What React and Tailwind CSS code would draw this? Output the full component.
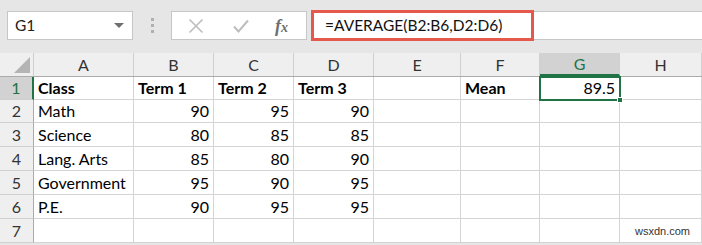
import React from 'react';

const cols = [
  { label: 'A', w: 'w-[100px]' },
  { label: 'B', w: 'w-[80px]' },
  { label: 'C', w: 'w-[80px]' },
  { label: 'D', w: 'w-[80px]' },
  { label: 'E', w: 'w-[87px]' },
  { label: 'F', w: 'w-[79px]' },
  { label: 'G', w: 'w-[80px]' },
  { label: 'H', w: 'flex-1' },
];

const rows = [
  { n: 1, h: 'h-[23px]', cells: ['Class', 'Term 1', 'Term 2', 'Term 3', '', 'Mean', '89.5', ''], bold: true },
  { n: 2, h: 'h-[23px]', cells: ['Math', '90', '95', '90', '', '', '', ''] },
  { n: 3, h: 'h-[24px]', cells: ['Science', '80', '85', '85', '', '', '', ''] },
  { n: 4, h: 'h-[24px]', cells: ['Lang. Arts', '85', '80', '90', '', '', '', ''] },
  { n: 5, h: 'h-[24px]', cells: ['Government', '95', '90', '95', '', '', '', ''] },
  { n: 6, h: 'h-[24px]', cells: ['P.E.', '90', '95', '95', '', '', '', ''] },
  { n: 7, h: 'h-[24px]', cells: ['', '', '', '', '', '', '', ''] },
];

const isNum = (v) => /^[0-9.]+$/.test(v);

const App = () => {
  return (
    <div className="w-[702px] h-[245px] bg-[#e6e6e6] overflow-hidden font-['Lato','Noto_Sans',sans-serif] text-[16px] text-black">

      {/* toolbar */}
      <div className="h-[53px] flex items-start pt-[11px] pl-[7px]">
        <div className="w-[126px] h-[29px] bg-white border border-[#c6c6c6] flex items-center justify-between pl-[7px] pr-[8px]">
          <span className="text-[15.5px] text-[#222]">G1</span>
          <div className="w-0 h-0 border-l-[5px] border-r-[5px] border-t-[5px] border-l-transparent border-r-transparent border-t-[#6f6f6f]"></div>
        </div>
        <div className="w-[38px] h-[29px] flex flex-col items-center justify-center gap-[3px]">
          <div className="w-[3px] h-[3px] bg-[#b0b0b0]"></div>
          <div className="w-[3px] h-[3px] bg-[#b0b0b0]"></div>
          <div className="w-[3px] h-[3px] bg-[#b0b0b0]"></div>
        </div>
        <div className="w-[136px] h-[29px] bg-white border border-[#c6c6c6] flex items-center pl-[16px]">
          <svg width="16" height="16" viewBox="0 0 16 16" className="mr-[29px]">
            <path d="M1.5 1.5 L14.5 14.5 M14.5 1.5 L1.5 14.5" stroke="#bdbdbd" strokeWidth="1.6" fill="none" />
          </svg>
          <svg width="16" height="14" viewBox="0 0 16 14" className="mr-[26px]">
            <path d="M1 7.5 L5.5 12.5 L15 1.5" stroke="#bdbdbd" strokeWidth="2" fill="none" />
          </svg>
          <span className="font-['Liberation_Serif',serif] italic font-bold text-[#6f6f6f] text-[18px] leading-none">f<span className="text-[14px]">x</span></span>
        </div>
        <div className="ml-[4px] flex-1 h-[29px] bg-white border-y border-[#c6c6c6] flex items-center">
          <div className="w-[223px] h-[31px] -my-px border-[3px] border-[#e5584c] flex items-center pl-[11px]">
            <span className="text-[15.5px] text-[#111]">=AVERAGE(B2:B6,D2:D6)</span>
          </div>
        </div>
      </div>

      {/* sheet */}
      <div className="bg-white relative">
        {/* column headers */}
        <div className="flex h-[24px] bg-[#efefef] border-b border-[#ababab]">
          <div className="w-[34px] flex items-end justify-end pr-[3px] pb-[3px] border-r border-[#d0d0d0]">
            <svg width="16" height="16" viewBox="0 0 16 16">
              <path d="M16 0 L16 16 L0 16 Z" fill="#b4b4b4" />
            </svg>
          </div>
          {cols.map((c) => (
            <div
              key={c.label}
              className={`${c.w} flex items-center justify-center border-r border-[#d0d0d0] ${c.label === 'G' ? 'bg-[#d2d2d2] text-[#217346] border-b-2 border-b-[#217346]' : 'text-[#333]'}`}
            >
              {c.label}
            </div>
          ))}
        </div>

        {rows.map((r) => (
          <div key={r.n} className={`flex ${r.h}`}>
            <div className={`w-[34px] flex items-center justify-center border-b border-[#d0d0d0] ${r.n === 1 ? 'bg-[#d2d2d2] border-r-2 border-r-[#217346] text-[#217346]' : 'bg-[#efefef] border-r border-r-[#ababab] text-[#333]'}`}>
              {r.n}
            </div>
            {r.cells.map((v, i) => (
              <div
                key={i}
                className={`${cols[i].w} flex items-center px-[4px] border-r border-b border-[#d4d4d4] ${isNum(v) ? 'justify-end' : 'justify-start'} ${r.bold && !isNum(v) ? 'font-bold' : ''}`}
              >
                {v}
              </div>
            ))}
          </div>
        ))}

        {/* active cell G1 */}
        <div className="absolute left-[539px] top-[23px] w-[82px] h-[25px] border-2 border-[#217346] pointer-events-none">
          <div className="absolute -right-[4px] -bottom-[4px] w-[6px] h-[6px] bg-[#217346] border border-white"></div>
        </div>

        <div className="absolute right-[12px] bottom-[4px] text-[11px] text-[#333] font-['Liberation_Sans',sans-serif]">wsxdn.com</div>
      </div>
    </div>
  );
};

export default App;
